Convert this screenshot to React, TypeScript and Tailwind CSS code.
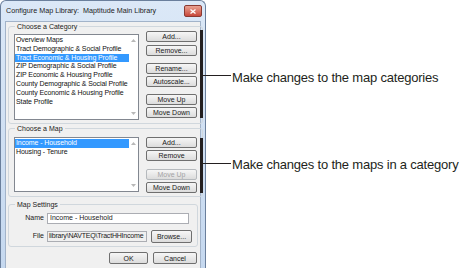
import type { ReactNode } from "react";

const ui = { fontFamily: '"Liberation Sans", Arial, sans-serif' };

const categories = [
  "Overview Maps",
  "Tract Demographic & Social Profile",
  "Tract Economic & Housing Profile",
  "ZIP Demographic & Social Profile",
  "ZIP Economic & Housing Profile",
  "County Demographic & Social Profile",
  "County Economic & Housing Profile",
  "State Profile",
];

const maps = ["Income - Household", "Housing - Tenure"];

function Btn({
  children,
  disabled = false,
  className = "",
}: {
  children: ReactNode;
  disabled?: boolean;
  className?: string;
}) {
  return (
    <div
      className={`flex h-[11px] items-center justify-center rounded-[2px] border bg-gradient-to-b from-[#f6f6f6] to-[#dcdcdc] text-[7px] leading-none ${
        disabled ? "border-[#b5b9bd] text-[#a3a3a3]" : "border-[#6f6f6f] text-[#1a1a1a]"
      } ${className}`}
    >
      {children}
    </div>
  );
}

function ListBox({
  items,
  selected,
  height,
}: {
  items: string[];
  selected: number;
  height: string;
}) {
  return (
    <div className={`flex w-[125px] ${height} border border-[#828790] bg-white`}>
      <div className="flex-1 pt-[1px]">
        {items.map((item, i) => (
          <div
            key={item}
            className={`h-[8.8px] whitespace-nowrap pl-[1px] text-[7px] leading-[8.8px] tracking-[-0.1px] ${
              i === selected ? "bg-[#3399ff] text-white" : "text-[#111]"
            }`}
          >
            {item}
          </div>
        ))}
      </div>
      <div className="flex w-[9px] flex-col items-center justify-between py-[4px]">
        <svg width="5" height="3" viewBox="0 0 5 3">
          <path d="M0 3 L2.5 0 L5 3 Z" fill="#b8b8b8" />
        </svg>
        <svg width="5" height="3" viewBox="0 0 5 3">
          <path d="M0 0 L2.5 3 L5 0 Z" fill="#b8b8b8" />
        </svg>
      </div>
    </div>
  );
}

function Group({
  title,
  children,
  className = "",
}: {
  title: string;
  children: ReactNode;
  className?: string;
}) {
  return (
    <fieldset className={`rounded-[3px] border border-[#d0d7dd] px-[5px] ${className}`}>
      <legend className="ml-[1px] px-[2px] text-[7px] leading-[9px] text-[#1a1a1a]">
        {title}
      </legend>
      {children}
    </fieldset>
  );
}

function Callout({
  top,
  barTop,
  barHeight,
  lineTop,
  text,
}: {
  top: number;
  barTop: string;
  barHeight: string;
  lineTop: string;
  text: string;
}) {
  return (
    <>
      <div className={`absolute left-[200px] ${barTop} ${barHeight} w-[3px] bg-[#231f20]`} />
      <div className={`absolute left-[203px] ${lineTop} h-[1px] w-[28px] bg-[#231f20]`} />
      <div
        className="absolute left-[232px] whitespace-nowrap text-[13px] leading-none tracking-[-0.2px] text-[#231f20]"
        style={{ top }}
      >
        {text}
      </div>
    </>
  );
}

export default function App() {
  return (
    <div className="relative h-[268px] w-[468px] overflow-hidden bg-white" style={ui}>
      {/* dialog window */}
      <div className="flex h-[268px] w-[206px] flex-col rounded-t-[6px] border border-b-0 border-[#6a7f9c] bg-gradient-to-b from-[#dbe8f7] to-[#c5d8ef]">
        <div className="flex h-[20px] items-center justify-between pl-[5px] pr-[3px]">
          <span className="text-[7.2px] text-[#1b1b1b]">
            Configure Map Library:&nbsp; Maptitude Main Library
          </span>
          <div className="flex h-[12px] w-[18px] items-center justify-center rounded-[2px] border border-[#8a3a32] bg-gradient-to-b from-[#e8a293] to-[#c7463a]">
            <svg width="6" height="5" viewBox="0 0 6 5">
              <path d="M0.5 0.5 L5.5 4.5 M5.5 0.5 L0.5 4.5" stroke="white" strokeWidth="1.3" />
            </svg>
          </div>
        </div>

        <div className="mx-[4px] flex flex-1 flex-col border border-b-0 border-[#a2b3c9] bg-[#f0f0f0] px-[2px]">
          <Group title="Choose a Category" className="pb-[3px]">
            <div className="flex items-start">
              <div className="mt-[3px]">
                <ListBox items={categories} selected={2} height="h-[86px]" />
              </div>
              <div className="ml-[7px] flex w-[51px] flex-col">
                <Btn>Add...</Btn>
                <Btn className="mt-[3px]">Remove...</Btn>
                <Btn className="mt-[7px]">Rename...</Btn>
                <Btn className="mt-[2px]">Autoscale...</Btn>
                <Btn className="mt-[7px]">Move Up</Btn>
                <Btn className="mt-[2px]">Move Down</Btn>
              </div>
            </div>
          </Group>

          <Group title="Choose a Map" className="pb-[3px]">
            <div className="mt-[4px] flex items-start">
              <ListBox items={maps} selected={0} height="h-[55px]" />
              <div className="ml-[7px] flex w-[51px] flex-col">
                <Btn>Add...</Btn>
                <Btn className="mt-[2px]">Remove</Btn>
                <Btn className="mt-[8px]" disabled>
                  Move Up
                </Btn>
                <Btn className="mt-[2px]">Move Down</Btn>
              </div>
            </div>
          </Group>

          <Group title="Map Settings" className="mt-[3px] pb-[3px]">
            <div className="mt-[4px] flex items-center text-[7px] text-[#1a1a1a]">
              <span className="w-[33px] pr-[3px] text-right">Name</span>
              <div className="flex h-[11px] w-[142px] items-center border border-[#abadb3] bg-white pl-[2px]">
                Income - Household
              </div>
            </div>
            <div className="mt-[6px] flex items-center text-[7px] text-[#1a1a1a]">
              <span className="w-[33px] pr-[3px] text-right">File</span>
              <div className="flex h-[11px] w-[100px] items-center overflow-hidden whitespace-nowrap border border-[#abadb3] bg-[#f0f0f0] pl-[1px] tracking-[-0.2px]">
                library\NAVTEQ\TractHHIncome
              </div>
              <Btn className="ml-[4px] h-[13px] w-[41px]">Browse...</Btn>
            </div>
          </Group>

          <div className="mt-[5px] flex justify-end gap-[5px] pr-[1px]">
            <Btn className="h-[12px] w-[39px]">OK</Btn>
            <Btn className="h-[12px] w-[44px]">Cancel</Btn>
          </div>
        </div>
      </div>

      {/* annotations */}
      <Callout
        top={71}
        barTop="top-[30px]"
        barHeight="h-[88px]"
        lineTop="top-[75px]"
        text="Make changes to the map categories"
      />
      <Callout
        top={158}
        barTop="top-[138px]"
        barHeight="h-[55px]"
        lineTop="top-[163px]"
        text="Make changes to the maps in a category"
      />
    </div>
  );
}
